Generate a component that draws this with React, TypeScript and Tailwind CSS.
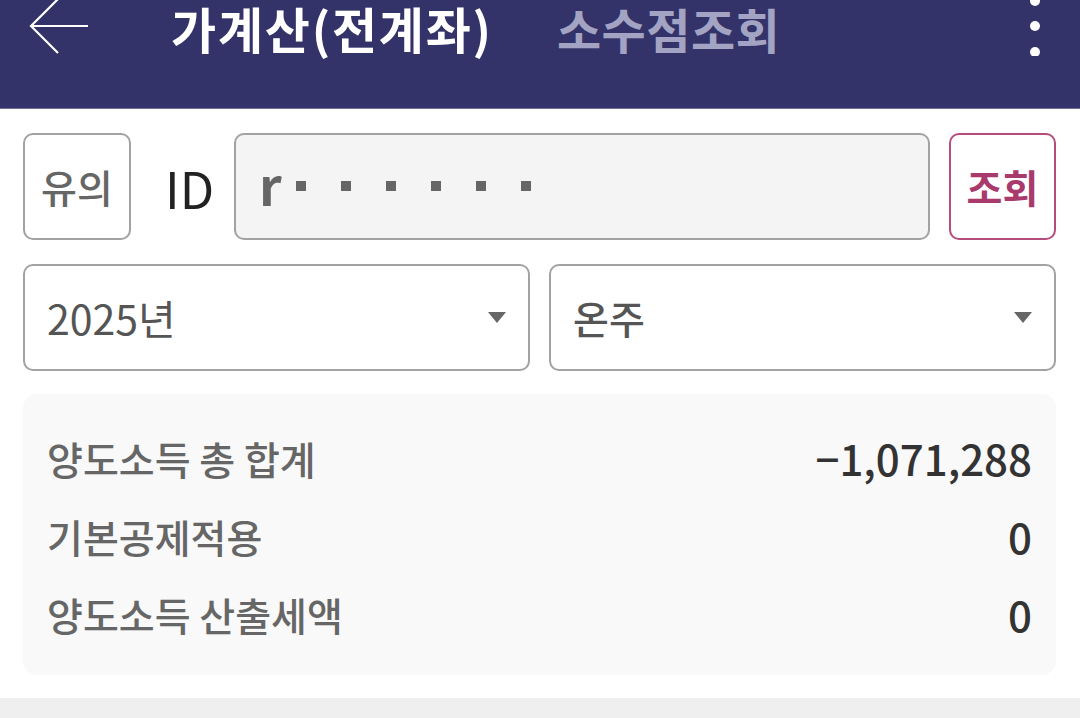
import React from "react";

const font = { fontFamily: '"Noto Sans CJK KR", "Noto Sans", sans-serif' };

function Caret() {
  return (
    <svg width="18" height="11" viewBox="0 0 18 11" className="shrink-0">
      <path d="M0 0 H18 L9 11 Z" fill="#666" />
    </svg>
  );
}

export default function App() {
  return (
    <div className="w-[1080px] h-[718px] overflow-hidden bg-white flex flex-col" style={font}>
      {/* Header */}
      <div className="h-[108px] bg-[#333369] border-b border-[#72729a] shrink-0 box-content">
        <div className="h-[56px] flex items-center">
          <svg width="60" height="56" viewBox="0 0 60 56" className="ml-[29px] shrink-0" fill="none" stroke="#fff" strokeWidth="2.2">
            <path d="M59 26 H2" />
            <path d="M29 -1 L2 26 L29 53" />
          </svg>
          <div className="ml-[82px] text-[49px] leading-[56px] font-bold text-white tracking-[1.8px]">가계산(전계좌)</div>
          <div className="ml-[64px] text-[48px] leading-[56px] font-bold text-[#a3a3c3] tracking-[0.5px]">소수점조회</div>
          <div className="flex-1" />
          <svg width="12" height="56" viewBox="0 0 12 56" className="mr-[39px] shrink-0" fill="#fff">
            <circle cx="6" cy="1" r="5" />
            <circle cx="6" cy="26" r="5" />
            <circle cx="6" cy="52" r="5" />
          </svg>
        </div>
      </div>

      {/* Row 1 */}
      <div className="mt-[24px] px-[23px] pr-[24px] flex items-stretch h-[107px]">
        <div className="w-[108px] shrink-0 border-2 border-[#a2a2a2] rounded-[10px] flex items-center justify-center text-[39px] text-[#666] font-medium">
          유의
        </div>
        <div className="ml-[34px] w-[58px] shrink-0 flex items-center text-[50px] text-[#222] leading-none">ID</div>
        <div className="ml-[11px] flex-1 bg-[#f4f4f4] border-2 border-[#a2a2a2] rounded-[10px] flex items-center pl-[23px]">
          <span className="text-[52px] font-semibold text-[#666] leading-none -mt-[6px]">r</span>
          <div className="flex items-center gap-[35px] ml-[14px] -mt-[2px]">
            {[0, 1, 2, 3, 4, 5].map((i) => (
              <div key={i} className="w-[10px] h-[10px] bg-[#666]" />
            ))}
          </div>
        </div>
        <div className="ml-[19px] w-[107px] shrink-0 border-2 border-[#b44c7c] rounded-[10px] flex items-center justify-center text-[39px] text-[#a83a6c] font-semibold">
          조회
        </div>
      </div>

      {/* Row 2 */}
      <div className="mt-[24px] px-[23px] pr-[24px] flex gap-[19px] h-[107px]">
        <div className="flex-1 border-2 border-[#a2a2a2] rounded-[10px] flex items-center justify-between pl-[22px] pr-[22px]">
          <span className="text-[41px] text-[#555] leading-none">2025년</span>
          <Caret />
        </div>
        <div className="flex-1 border-2 border-[#a2a2a2] rounded-[10px] flex items-center justify-between pl-[22px] pr-[22px]">
          <span className="text-[39px] text-[#555] font-medium leading-none">온주</span>
          <Caret />
        </div>
      </div>

      {/* Summary */}
      <div className="mt-[23px] mx-[23px] mr-[24px] bg-[#f9f9f9] rounded-[14px] pt-[25px] pb-[22px] pl-[24px] pr-[24px]">
        {[
          ["양도소득 총 합계", "−1,071,288"],
          ["기본공제적용", "0"],
          ["양도소득 산출세액", "0"],
        ].map(([l, v]) => (
          <div key={l} className="h-[78px] flex items-center justify-between">
            <span className="text-[39px] text-[#666] font-medium leading-none">{l}</span>
            <span className="text-[42px] text-[#333] font-medium leading-none">{v}</span>
          </div>
        ))}
      </div>

      <div className="mt-[23px] flex-1 bg-[#efefef]" />
    </div>
  );
}
